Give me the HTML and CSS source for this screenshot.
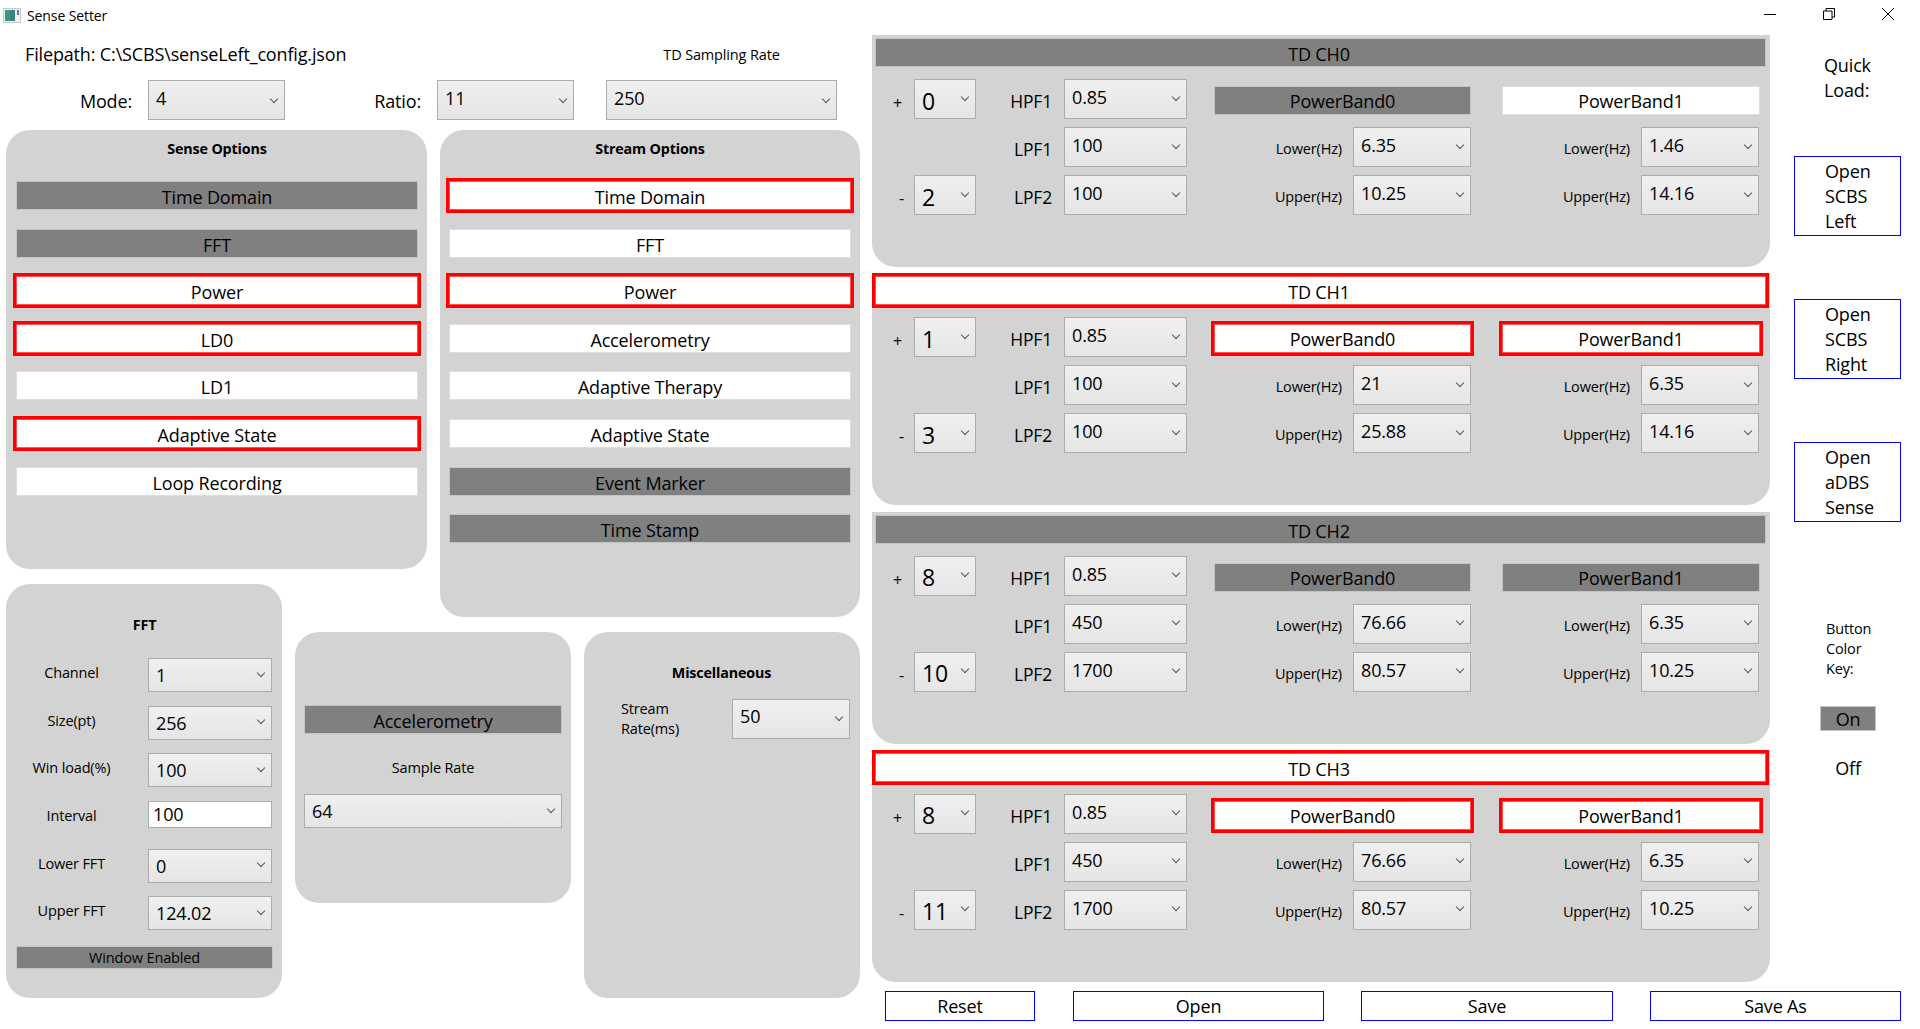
FILE: index.html
```html
<!DOCTYPE html>
<html lang="en">
<head>
  <meta charset="UTF-8">
  <link rel="stylesheet" href="styles.css">
  <title>Sense Setter</title>
</head>
<body>

  <div class="titlebar">
    <svg class="app-icon" width="18" height="15" viewBox="0 0 18 15">
      <rect x="0.5" y="0.5" width="17" height="14" fill="#f2f2f2" stroke="#c9c9c9"/>
      <rect x="2" y="2" width="10" height="11" fill="#3f7f8c"/>
      <rect x="2" y="2" width="5" height="11" fill="#2f9f7a"/>
      <rect x="14" y="2" width="2" height="5" fill="#4a78b5"/>
    </svg>
    <span class="app-title">Sense Setter</span>
    <div class="win-controls">
      <svg width="12" height="12" viewBox="0 0 12 12"><path d="M0 6.5H12" stroke="#000" fill="none"/></svg>
      <svg width="12" height="12" viewBox="0 0 12 12"><path d="M0.5 3H9V11.5H0.5ZM3 3V0.5H11.5V9H9" stroke="#000" fill="none"/></svg>
      <svg width="12" height="12" viewBox="0 0 12 12"><path d="M0 0L12 12M12 0L0 12" stroke="#000" fill="none"/></svg>
    </div>
  </div>

  <div class="page">

    <div class="left">
      <div class="file-row">
        <span class="filepath">Filepath: C:\SCBS\senseLeft_config.json</span>
        <span class="rate-title">TD Sampling Rate</span>
      </div>
      <div class="mode-row">
        <span class="mode-label">Mode:</span>
        <div class="combo mode-combo"><span>4</span></div>
        <span class="ratio-label">Ratio:</span>
        <div class="combo mode-combo"><span>11</span></div>
        <div class="combo rate-combo"><span>250</span></div>
      </div>

      <div class="panels">
        <div class="panel sense">
          <div class="panel-title">Sense Options</div>
          <div class="toggles">
            <div class="toggle">Time Domain</div>
            <div class="toggle">FFT</div>
            <div class="toggle on">Power</div>
            <div class="toggle on">LD0</div>
            <div class="toggle off">LD1</div>
            <div class="toggle on">Adaptive State</div>
            <div class="toggle off">Loop Recording</div>
          </div>
        </div>

        <div class="panel stream">
          <div class="panel-title">Stream Options</div>
          <div class="toggles">
            <div class="toggle on">Time Domain</div>
            <div class="toggle off">FFT</div>
            <div class="toggle on">Power</div>
            <div class="toggle off">Accelerometry</div>
            <div class="toggle off">Adaptive Therapy</div>
            <div class="toggle off">Adaptive State</div>
            <div class="toggle">Event Marker</div>
            <div class="toggle">Time Stamp</div>
          </div>
        </div>

        <div class="panel fft">
          <div class="panel-title">FFT</div>
          <div class="fft-grid">
            <span class="fft-label">Channel</span>
            <div class="combo low"><span>1</span></div>
            <span class="fft-label">Size(pt)</span>
            <div class="combo low"><span>256</span></div>
            <span class="fft-label">Win load(%)</span>
            <div class="combo low"><span>100</span></div>
            <span class="fft-label">Interval</span>
            <div class="text-input">100</div>
            <span class="fft-label">Lower FFT</span>
            <div class="combo low"><span>0</span></div>
            <span class="fft-label">Upper FFT</span>
            <div class="combo low"><span>124.02</span></div>
          </div>
          <div class="toggle window-toggle">Window Enabled</div>
        </div>

        <div class="panel accel">
          <div class="toggle">Accelerometry</div>
          <div class="sample-label">Sample Rate</div>
          <div class="combo low sample-combo"><span>64</span></div>
        </div>

        <div class="panel misc">
          <div class="panel-title">Miscellaneous</div>
          <div class="misc-row">
            <span class="misc-label">Stream<br>Rate(ms)</span>
            <div class="combo misc-combo"><span>50</span></div>
          </div>
        </div>
      </div>
    </div>

    <div class="channels">

      <div class="channel">
        <div class="toggle ch-head">TD CH0</div>
        <div class="ch-grid">
          <span class="sign">+</span>
          <div class="combo sign-combo"><span>0</span></div>
          <span class="filter-label">HPF1</span>
          <div class="combo"><span>0.85</span></div>
          <div class="toggle band band0">PowerBand0</div>
          <div class="toggle off band band1">PowerBand1</div>

          <span class="filter-label lpf1">LPF1</span>
          <div class="combo"><span>100</span></div>
          <span class="hz-label">Lower(Hz)</span>
          <div class="combo"><span>6.35</span></div>
          <span class="hz-label">Lower(Hz)</span>
          <div class="combo"><span>1.46</span></div>

          <span class="sign minus">-</span>
          <div class="combo sign-combo"><span>2</span></div>
          <span class="filter-label">LPF2</span>
          <div class="combo"><span>100</span></div>
          <span class="hz-label">Upper(Hz)</span>
          <div class="combo"><span>10.25</span></div>
          <span class="hz-label">Upper(Hz)</span>
          <div class="combo"><span>14.16</span></div>
        </div>
      </div>

      <div class="channel">
        <div class="toggle on ch-head">TD CH1</div>
        <div class="ch-grid">
          <span class="sign">+</span>
          <div class="combo sign-combo"><span>1</span></div>
          <span class="filter-label">HPF1</span>
          <div class="combo"><span>0.85</span></div>
          <div class="toggle on band band0">PowerBand0</div>
          <div class="toggle on band band1">PowerBand1</div>

          <span class="filter-label lpf1">LPF1</span>
          <div class="combo"><span>100</span></div>
          <span class="hz-label">Lower(Hz)</span>
          <div class="combo"><span>21</span></div>
          <span class="hz-label">Lower(Hz)</span>
          <div class="combo"><span>6.35</span></div>

          <span class="sign minus">-</span>
          <div class="combo sign-combo"><span>3</span></div>
          <span class="filter-label">LPF2</span>
          <div class="combo"><span>100</span></div>
          <span class="hz-label">Upper(Hz)</span>
          <div class="combo"><span>25.88</span></div>
          <span class="hz-label">Upper(Hz)</span>
          <div class="combo"><span>14.16</span></div>
        </div>
      </div>

      <div class="channel">
        <div class="toggle ch-head">TD CH2</div>
        <div class="ch-grid">
          <span class="sign">+</span>
          <div class="combo sign-combo"><span>8</span></div>
          <span class="filter-label">HPF1</span>
          <div class="combo"><span>0.85</span></div>
          <div class="toggle band band0">PowerBand0</div>
          <div class="toggle band band1">PowerBand1</div>

          <span class="filter-label lpf1">LPF1</span>
          <div class="combo"><span>450</span></div>
          <span class="hz-label">Lower(Hz)</span>
          <div class="combo"><span>76.66</span></div>
          <span class="hz-label">Lower(Hz)</span>
          <div class="combo"><span>6.35</span></div>

          <span class="sign minus">-</span>
          <div class="combo sign-combo"><span>10</span></div>
          <span class="filter-label">LPF2</span>
          <div class="combo"><span>1700</span></div>
          <span class="hz-label">Upper(Hz)</span>
          <div class="combo"><span>80.57</span></div>
          <span class="hz-label">Upper(Hz)</span>
          <div class="combo"><span>10.25</span></div>
        </div>
      </div>

      <div class="channel">
        <div class="toggle on ch-head">TD CH3</div>
        <div class="ch-grid">
          <span class="sign">+</span>
          <div class="combo sign-combo"><span>8</span></div>
          <span class="filter-label">HPF1</span>
          <div class="combo"><span>0.85</span></div>
          <div class="toggle on band band0">PowerBand0</div>
          <div class="toggle on band band1">PowerBand1</div>

          <span class="filter-label lpf1">LPF1</span>
          <div class="combo"><span>450</span></div>
          <span class="hz-label">Lower(Hz)</span>
          <div class="combo"><span>76.66</span></div>
          <span class="hz-label">Lower(Hz)</span>
          <div class="combo"><span>6.35</span></div>

          <span class="sign minus">-</span>
          <div class="combo sign-combo"><span>11</span></div>
          <span class="filter-label">LPF2</span>
          <div class="combo"><span>1700</span></div>
          <span class="hz-label">Upper(Hz)</span>
          <div class="combo"><span>80.57</span></div>
          <span class="hz-label">Upper(Hz)</span>
          <div class="combo"><span>10.25</span></div>
        </div>
      </div>

    </div>

    <div class="side">
      <div class="quick-load">Quick<br>Load:</div>
      <button class="blue-btn open-btn">Open<br>SCBS<br>Left</button>
      <button class="blue-btn open-btn">Open<br>SCBS<br>Right</button>
      <button class="blue-btn open-btn">Open<br>aDBS<br>Sense</button>
      <div class="key-label">Button<br>Color<br>Key:</div>
      <div class="toggle key-on">On</div>
      <div class="key-off">Off</div>
    </div>

    <div class="footer">
      <button class="blue-btn reset-btn">Reset</button>
      <button class="blue-btn wide-btn">Open</button>
      <button class="blue-btn wide-btn save-btn">Save</button>
      <button class="blue-btn wide-btn">Save As</button>
    </div>

  </div>

</body>
</html>
```

FILE: styles.css
```css
* {
  box-sizing: border-box;
}

body {
  margin: 0;
  width: 1920px;
  height: 1029px;
  overflow: hidden;
  background-color: #ffffff;
  color: #000000;
  font-family: "Open Sans", "Liberation Sans", sans-serif;
  font-size: 18px;
  letter-spacing: -0.15px;
}

/* title bar */
.titlebar {
  display: flex;
  align-items: center;
  height: 30px;
  padding-left: 3px;
}

.app-icon {
  margin-right: 6px;
}

.app-title {
  font-size: 14px;
  letter-spacing: -0.1px;
}

.win-controls {
  display: flex;
  gap: 47px;
  margin-left: auto;
  margin-right: 26px;
  padding-bottom: 3px;
}

/* page grid */
.page {
  display: grid;
  grid-template-columns: 860px 898px 119px;
  grid-template-rows: 961px 30px;
  column-gap: 12px;
}

.left {
  grid-row: 1 / 3;
  padding-left: 6px;
}

.file-row {
  display: flex;
  align-items: center;
  height: 50px;
  padding: 0 23px 2px 19px;
}

.filepath {
  flex: 1;
}

.rate-title {
  width: 231px;
  font-size: 14.5px;
  text-align: center;
}

.mode-row {
  display: flex;
  align-items: flex-start;
  height: 50px;
}

.mode-label,
.ratio-label {
  line-height: 42px;
  text-align: right;
  margin-right: 16px;
}

.mode-label {
  width: 126px;
}

.ratio-label {
  width: 136px;
}

.mode-combo {
  width: 137px;
  height: 41px;
  padding-bottom: 8px;
}

.rate-combo {
  width: 231px;
  height: 37px;
  margin-left: 32px;
  padding-bottom: 7px;
}

/* combo box */
.combo {
  display: flex;
  align-items: center;
  height: 40px;
  padding: 0 7px 4px 7px;
  border: 1px solid #acacac;
  background: linear-gradient(#f0f0f0, #e5e5e5);
}

.combo::after {
  content: "";
  width: 5px;
  height: 5px;
  margin-left: auto;
  margin-top: -1px;
  border-right: 1.5px solid #555555;
  border-bottom: 1.5px solid #555555;
  transform: rotate(45deg);
}

.mode-combo::after,
.rate-combo::after,
.misc-combo::after {
  margin-top: 1px;
}

.combo.low {
  height: 34px;
  padding-bottom: 0;
}

.combo.low::after {
  margin-top: -5px;
}

.text-input {
  height: 27px;
  padding-left: 4px;
  border: 1px solid #acacac;
  background-color: #ffffff;
  line-height: 25px;
}

/* left panels */
.panels {
  display: grid;
  grid-template-columns: 276px 132px 131px 276px;
  grid-template-rows: 439px 15px 33px 15px 271px 95px;
  column-gap: 13px;
}

.panel {
  padding: 0 9px;
  border-radius: 24px;
  background-color: #d3d3d3;
}

.panel-title {
  height: 20px;
  font-size: 14.3px;
  font-weight: 700;
  line-height: 20px;
  text-align: center;
}

.sense {
  grid-column: 1 / 3;
  grid-row: 1;
  padding: 9px 9px 0 10px;
}

.stream {
  grid-column: 3 / 5;
  grid-row: 1 / 4;
  padding: 9px 9px 0;
}

.fft {
  grid-column: 1;
  grid-row: 3 / 7;
  padding: 31px 9px 0 10px;
}

.accel {
  grid-column: 2 / 4;
  grid-row: 5;
  padding-top: 73px;
}

.misc {
  grid-column: 4;
  grid-row: 5 / 7;
  padding: 31px 10px 0 9px;
}

.toggles {
  display: flex;
  flex-direction: column;
  gap: 18.6px;
  margin-top: 22px;
}

.toggle {
  height: 29px;
  padding-top: 2px;
  border: 1px solid #c4c4c4;
  background-color: #808080;
  line-height: 26px;
  text-align: center;
}

.toggle.off {
  border-color: #dddddd;
  background-color: #ffffff;
}

.toggle.on {
  border-color: #ff5050;
  background-color: #ffffff;
  outline: 3px solid #ff0000;
}

.fft-grid {
  display: grid;
  grid-template-columns: 111px 124px;
  grid-auto-rows: 34px;
  gap: 13.7px 21px;
  margin-top: 23px;
}

.fft-label {
  padding-bottom: 4px;
  font-size: 14.5px;
  line-height: 30px;
  text-align: center;
}

.window-toggle {
  height: 23px;
  margin-top: 16px;
  padding-top: 1px;
  font-size: 14.5px;
  line-height: 20px;
}

.sample-label {
  margin-top: 24px;
  font-size: 14.5px;
  line-height: 20px;
  text-align: center;
}

.sample-combo {
  margin-top: 16px;
}

.misc-row {
  display: flex;
  align-items: center;
  margin-top: 16px;
  padding-left: 28px;
}

.misc-label {
  font-size: 14.5px;
  line-height: 20px;
}

.misc-combo {
  width: 118px;
  margin-left: auto;
  padding-bottom: 6px;
}

/* TD channels */
.channels {
  display: flex;
  flex-direction: column;
  gap: 6.33px;
  padding-top: 5px;
}

.channel {
  height: 232px;
  padding: 3px 3px 0;
  border-radius: 0 0 24px 24px;
  background-color: #d3d3d3;
}

.ch-head {
  width: 891px;
  padding-right: 3px;
}

.ch-grid {
  display: grid;
  grid-template-columns: 39px 62px 88px 123px 166px 118px 170px 118px;
  grid-auto-rows: 40px;
  row-gap: 8px;
  margin-top: 12px;
}

.sign {
  padding: 0 0 0 6px;
  font-size: 16px;
  line-height: 48px;
  text-align: center;
}

.minus {
  padding-left: 14px;
  line-height: 46px;
}

.sign-combo {
  padding: 3px 7px 0 7px;
  font-size: 23px;
}

.sign-combo::after {
  margin-top: -8px;
}

.filter-label {
  padding-right: 12px;
  font-size: 17.5px;
  line-height: 44px;
  text-align: right;
}

.lpf1 {
  grid-column: 3;
}

.hz-label {
  padding-right: 11px;
  font-size: 14.5px;
  line-height: 44px;
  text-align: right;
}

.band {
  margin-top: 7px;
  padding-top: 1px;
}

.band0 {
  grid-column: span 2;
  margin-left: 27px;
}

.band1 {
  grid-column: span 2;
  margin-left: 31px;
  margin-right: -1px;
}

/* right column */
.side {
  padding: 23px 0 0 12px;
}

.quick-load {
  padding-left: 30px;
  line-height: 25px;
}

.blue-btn {
  display: block;
  padding: 0;
  border: 1px solid #0000ff;
  background-color: #ffffff;
  color: #000000;
  font: inherit;
  letter-spacing: inherit;
  line-height: 25px;
}

.open-btn {
  width: 107px;
  height: 80px;
  margin-top: 63px;
  padding-left: 30px;
  text-align: left;
}

.quick-load + .open-btn {
  margin-top: 53px;
}

.key-label {
  margin-top: 97px;
  padding-left: 32px;
  font-size: 14.5px;
  line-height: 20px;
}

.key-on {
  width: 56px;
  height: 25px;
  margin-top: 27px;
  margin-left: 26px;
  padding-top: 0;
  line-height: 25px;
}

.key-off {
  width: 82px;
  margin-top: 25px;
  padding-left: 26px;
  text-align: center;
}

.footer {
  grid-column: 2 / 4;
  display: flex;
  gap: 37px;
  padding-left: 13px;
}

.reset-btn {
  width: 150px;
  height: 30px;
  margin-right: 1px;
}

.wide-btn {
  width: 251px;
  height: 30px;
}

.save-btn {
  width: 252px;
}
```
